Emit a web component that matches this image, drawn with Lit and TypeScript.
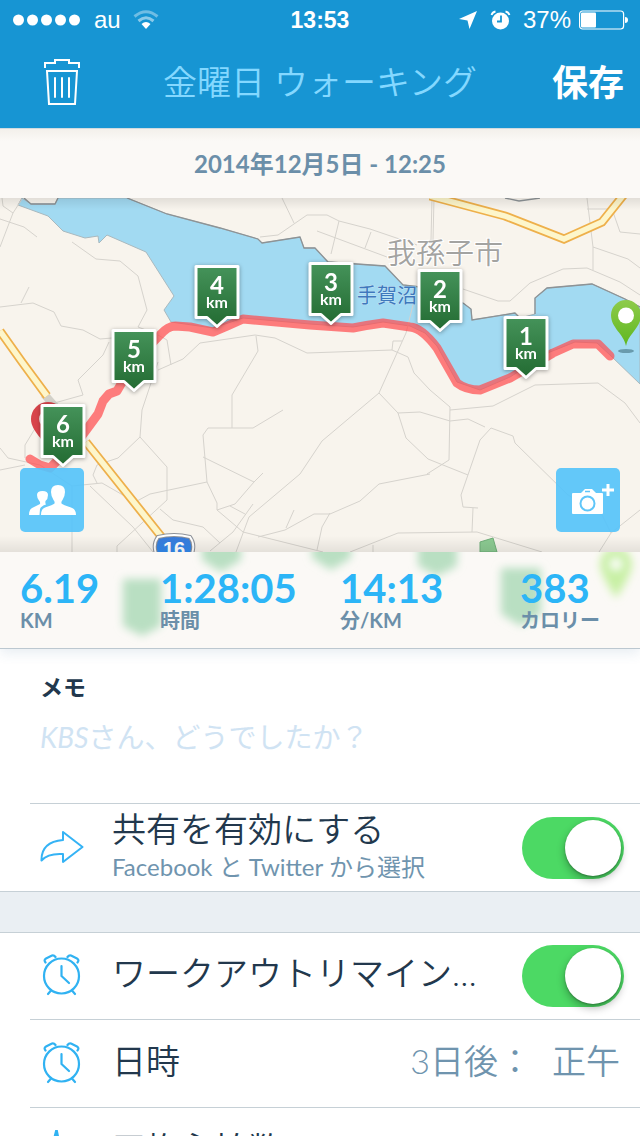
import { LitElement, html, svg, css } from "lit";
import { customElement, property, state } from "lit/decorators.js";

interface Marker {
  km: number;
  x: number;
  y: number;
}

const MARKERS: Marker[] = [
  { km: 6, x: 63, y: 404 },
  { km: 5, x: 134, y: 329 },
  { km: 4, x: 217, y: 265 },
  { km: 3, x: 331, y: 262 },
  { km: 2, x: 440, y: 269 },
  { km: 1, x: 526, y: 316 },
];

const LANES = [
  "2,198 3,206 13,213 22,199",
  "13,213 0,247",
  "0,219 24,227 37,237",
  "72,242 96,259 120,261 138,276 147,310 138,327 146,330",
  "29,287 21,303",
  "0,307 33,303 54,312 61,326 83,330 100,339 112,338",
  "109,342 103,355 78,380 83,395 40,407",
  "42,417 25,445 25,458",
  "158,370 183,359 200,343 255,335 275,338 307,353 392,350 408,357 414,373 430,390 450,407 449,460 427,474",
  "158,335 167,340 171,365",
  "158,362 142,410 140,437 118,458 97,465 93,475 97,483",
  "282,198 294,223",
  "260,237 278,235 307,215 327,215 339,221 370,229 417,245",
  "339,221 331,254",
  "317,231 387,257",
  "371,232 365,248",
  "256,336 258,351 232,395 232,428",
  "413,305 406,333 379,393 322,441 300,474 249,517 236,552",
  "392,350 393,341 402,341",
  "283,410 253,428 208,428 203,435 207,482 217,503 217,510 243,532 323,552",
  "203,457 254,482 263,473",
  "254,482 235,504 217,510",
  "230,506 245,514",
  "253,504 233,532 210,551",
  "258,537 285,530 314,514 330,514 360,501 379,484 430,474",
  "294,510 286,528",
  "330,513 322,527 317,550",
  "379,393 398,413 406,438 428,459 468,475",
  "398,413 420,412 450,421 468,419 485,427",
  "350,552 398,533 477,532 542,552",
  "373,545 373,552",
  "450,410 493,406 535,385 598,383 625,403 640,423",
  "602,515 568,495 515,443 513,436 491,428 480,440 461,495 463,507 478,508",
  "473,508 472,532",
  "602,515 611,533 599,552",
  "640,510 611,533",
  "0,448 8,458 40,465 72,486 102,483 135,502",
  "0,470 25,465",
  "90,486 133,527 153,552",
  "72,486 72,552",
  "137,501 150,494 207,482",
  "140,437 167,467 167,500 117,546 117,552",
  "160,509 173,520 203,527 220,543",
  "432,198 431,240",
  "434,198 433,240",
  "587,198 593,247 593,270",
  "593,247 628,259 640,268",
  "587,209 612,209 620,232 640,234",
  "463,289 498,301 510,301 530,283 563,269 587,268 620,282 640,295",
];

const SHORES = [
  "24,198 31,204 55,204 58,198",
  "127,198 167,214 220,228 258,239 262,243 300,237 304,248 315,248 328,262 385,266 403,285 420,287",
  "463,303 471,309 472,320 515,313 520,318",
  "535,314 535,298 547,288 592,284 625,299 640,307",
  "505,198 519,201 540,198",
];

const WATER =
  "M22 198 L31 204 55 204 58 198 127 198 167 214 220 228 258 239 262 243 300 237 304 248 315 248 328 262 385 266 403 285 430 288 463 303 471 309 472 320 515 313 520 318 535 314 535 298 547 288 592 284 625 299 640 307 V384 L611 356 597 343 575 342 550 352 510 377 480 390 457 382 437 346 425 333 410 326 383 322 353 327 310 324 243 318 213 328 171 322 164 310 174 296 146 252 107 235 99 243 98 236 85 238 63 231 48 216 18 205 Z";

const ROUTE =
  "M30 459 L40 465 50 468 57 461 75 445 87 429 98 414 103 401 109 394 117 391 134 362 160 335 Q168 326 175 326 L190 327 213 332 Q228 326 243 319 L310 325 353 328 Q368 325 383 323 L410 327 Q422 328 437 348 L457 383 Q466 390 480 390 L510 378 553 353 573 344 598 344 610 356";

const ROADS = [
  "0,331 22,362 47,396",
  "86,442 160,535 174,552",
  "430,196 505,216 564,239 602,222 626,192",
];

const BADGE = "M-21 1.500 H21 V52.500 H10 L0 61.500 L-10 52.500 H-21 Z";

@customElement("route-map")
export class RouteMap extends LitElement {
  static styles = css`
    :host {
      display: block;
      min-width: 0;
    }
    svg {
      display: block;
      width: 100%;
      height: 354px;
    }
    .lane {
      fill: none;
      stroke: #d6d3cd;
      stroke-width: 1;
    }
    .shore {
      fill: none;
      stroke: #8d9396;
      stroke-width: 1.300;
    }
    .road-edge {
      fill: none;
      stroke: #eeb04b;
      stroke-width: 9;
    }
    .road {
      fill: none;
      stroke: #fdf6cb;
      stroke-width: 5.500;
    }
    .route {
      fill: none;
      stroke: #ff4d50;
      stroke-opacity: 0.720;
      stroke-width: 9;
      stroke-linecap: round;
      stroke-linejoin: round;
    }
    .badge {
      fill: url(#badge);
      stroke: #fff;
      stroke-width: 3;
      stroke-linejoin: round;
    }
    .marker {
      filter: drop-shadow(0 1px 2px rgba(0, 0, 0, 0.350));
    }
    text {
      font-family: Lato, "Noto Sans CJK JP", sans-serif;
      text-anchor: middle;
    }
    .km {
      fill: #fff;
      font-size: 24px;
      font-weight: 700;
    }
    .unit {
      font-size: 16px;
    }
    .city {
      fill: #a3a3a1;
      font-size: 29px;
      font-weight: 350;
      stroke: #fff;
      stroke-width: 2;
      paint-order: stroke;
    }
    .lake {
      fill: #3e78bd;
      font-size: 20px;
      font-weight: 400;
      stroke: #c5e5f5;
      stroke-width: 1;
      paint-order: stroke;
    }
    .shield {
      fill: #fff;
      font-family: "Liberation Sans", sans-serif;
      font-size: 20px;
      font-weight: 700;
    }
  `;

  render() {
    return html`
      <svg viewBox="0 198 640 354" preserveAspectRatio="xMidYMid slice" role="img" aria-label="ウォーキングのルート">
        <defs>
          <linearGradient id="badge" x1="0" y1="0" x2="0" y2="1">
            <stop offset="0" stop-color="#45935a" />
            <stop offset="1" stop-color="#236b32" />
          </linearGradient>
          <linearGradient id="start" x1="0" y1="0" x2="0" y2="1">
            <stop offset="0" stop-color="#8ecb4b" />
            <stop offset="1" stop-color="#5fb71f" />
          </linearGradient>
          <linearGradient id="blue" x1="0" y1="0" x2="0" y2="1">
            <stop offset="0" stop-color="#3a78d6" />
            <stop offset="1" stop-color="#2f8ff5" />
          </linearGradient>
          <linearGradient id="top" x1="0" y1="0" x2="0" y2="1">
            <stop offset="0" stop-color="#000" stop-opacity=".09" />
            <stop offset="1" stop-color="#000" stop-opacity="0" />
          </linearGradient>
          <linearGradient id="bottom" x1="0" y1="1" x2="0" y2="0">
            <stop offset="0" stop-color="#000" stop-opacity=".08" />
            <stop offset="1" stop-color="#000" stop-opacity="0" />
          </linearGradient>
        </defs>
        <rect y="198" width="640" height="354" fill="#f8f4ed" />
        <path d=${WATER} fill="#a2daf2" stroke="#a9b9bf" stroke-width="1" />
        ${LANES.map((p) => svg`<polyline class="lane" points=${p} />`)}
        ${SHORES.map((p) => svg`<polyline class="shore" points=${p} />`)}
        <path d="M480 542 493 538 497 552H480Z" fill="#8ccb92" stroke="#6fae78" />
        <path d="M44 394 L58 410" stroke="#d3d1c9" stroke-width="8" />
        ${ROADS.map((p) => svg`<polyline class="road-edge" points=${p} /><polyline class="road" points=${p} />`)}
        <text class="city" x="445" y="264">我孫子市</text>
        <text class="lake" x="387" y="303">手賀沼</text>
        <path d="M48 452 C46 440 31 432 31 419 a17 17 0 0 1 34 0 C65 432 50 440 48 452Z" fill="#d8444b" />
        <circle cx="48" cy="419" r="9" fill="#f3dfdc" />
        <path class="route" d=${ROUTE} />
        <ellipse cx="626" cy="351" rx="8" ry="2" fill="#43717f" opacity=".6" />
        <path d="M626 346 C624 334 611 328 611 315 a15 15 0 0 1 30 0 C641 328 628 334 626 346Z" fill="url(#start)" />
        <circle cx="626" cy="315.500" r="8" fill="#fff" />
        <path d="M158 537 Q174 533 190 537 Q196 545 191 556 H157 Q152 545 158 537Z" fill="url(#blue)" stroke="#8e9299" stroke-width="4" />
        <path d="M158 537 Q174 533 190 537 Q196 545 191 556 H157 Q152 545 158 537Z" fill="none" stroke="#fff" stroke-width="2" />
        <text class="shield" x="174" y="556">16</text>
        ${MARKERS.map(
          (m) => svg`<g class="marker" transform="translate(${m.x} ${m.y})">
            <path class="badge" d=${BADGE} />
            <text class="km"><tspan x="0" y="29">${m.km}</tspan><tspan class="unit" x="0" y="43">km</tspan></text>
          </g>`
        )}
        <rect y="198" width="640" height="12" fill="url(#top)" />
        <rect y="536" width="640" height="16" fill="url(#bottom)" />
      </svg>
    `;
  }
}

@customElement("toggle-switch")
export class ToggleSwitch extends LitElement {
  @property() label = "";
  @state() private on = true;

  static styles = css`
    :host {
      display: block;
      flex: none;
    }
    .switch {
      appearance: none;
      display: flex;
      box-sizing: border-box;
      width: 102px;
      height: 62px;
      margin: 0;
      padding: 3px;
      border-radius: 31px;
      background: #dfe3e6;
    }
    .switch::before {
      content: "";
      width: 56px;
      height: 56px;
      border-radius: 50%;
      background: #fff;
      box-shadow: 0 4px 8px rgba(0, 0, 0, 0.300), 0 1px 2px rgba(0, 0, 0, 0.250);
    }
    .switch:checked {
      justify-content: flex-end;
      background: #4cd964;
    }
  `;

  render() {
    return html`<input
      class="switch"
      type="checkbox"
      role="switch"
      aria-label=${this.label}
      .checked=${this.on}
      @change=${() => (this.on = !this.on)}
    />`;
  }
}

const alarmIcon = html`<svg class="icon" viewBox="0 0 44 44" width="44" height="44" aria-hidden="true">
  <g fill="none" stroke="#30b2f2" stroke-width="2.200" stroke-linecap="round" stroke-linejoin="round">
    <circle cx="21.500" cy="22" r="17.500" />
    <path d="M21.500 12 V22 L29 29" />
    <path d="M5.500 8.500 Q3.500 6 6 4.500 L12 1.500 Q14 1 15.500 3" />
    <path d="M37.500 8.500 Q39.500 6 37 4.500 L31 1.500 Q29 1 27.500 3" />
    <path d="M11 36.500 L8 40 M32 36.500 L35 40" />
  </g>
</svg>`;

@customElement("app-root")
export class AppRoot extends LitElement {
  private stats = [
    { value: "6.19", unit: "KM" },
    { value: "1:28:05", unit: "時間" },
    { value: "14:13", unit: "分/KM" },
    { value: "383", unit: "カロリー" },
  ];

  static styles = css`
    :host {
      display: block;
      height: 100vh;
      overflow: hidden;
      background: #fff;
      color: #22384d;
      font-family: Lato, "Noto Sans CJK JP", sans-serif;
    }
    h1,
    h2,
    p {
      margin: 0;
    }
    button {
      border: 0;
      margin: 0;
      padding: 0;
      background: none;
      color: inherit;
      font-family: inherit;
    }
    svg {
      display: block;
      flex: none;
    }
    header {
      background: #1795d3;
      color: #fff;
    }
    .status {
      display: grid;
      grid-template-columns: 1fr auto 1fr;
      align-items: center;
      height: 40px;
      padding: 0 12px;
      font: 24px/40px "Liberation Sans", sans-serif;
    }
    .status-left,
    .status-right {
      display: flex;
      align-items: center;
      gap: 12px;
    }
    .status-right {
      justify-content: flex-end;
      gap: 8px;
    }
    .clock {
      font-size: 23px;
      font-weight: 700;
    }
    .nav {
      display: grid;
      grid-template-columns: 92px 1fr 92px;
      align-items: center;
      height: 84px;
      padding: 0 16px 4px;
    }
    .trash {
      justify-self: center;
    }
    .nav-title {
      text-align: center;
      color: #84d8ff;
      font-size: 34px;
      font-weight: 350;
      line-height: 48px;
      white-space: nowrap;
    }
    .save {
      justify-self: end;
      font-size: 36px;
      font-weight: 700;
      line-height: 48px;
      white-space: nowrap;
    }
    .date {
      border-top: 1px solid #cfdbe0;
      background: linear-gradient(#f3f0eb, #fbf9f6 12px);
      color: #6b8fa9;
      font-size: 24px;
      font-weight: 700;
      line-height: 69px;
      text-align: center;
    }
    .map {
      display: grid;
    }
    .map > * {
      grid-area: 1 / 1;
    }
    .tools {
      display: flex;
      justify-content: space-between;
      align-self: end;
      padding: 20px;
    }
    .tool {
      display: grid;
      place-items: center;
      width: 64px;
      height: 64px;
      border-radius: 5px;
      background: rgba(86, 195, 250, 0.920);
    }
    .stats {
      display: grid;
      overflow: hidden;
      border-bottom: 1px solid #bcc8d0;
      background: #fbf9f6;
      box-shadow: 0 4px 12px rgba(60, 110, 150, 0.120);
    }
    .stats > * {
      grid-area: 1 / 1;
    }
    .ghosts {
      width: 100%;
      height: 96px;
    }
    .figures {
      display: grid;
      grid-template-columns: 7fr 9fr 9fr 5fr;
      padding: 12px 20px;
      white-space: nowrap;
    }
    .figure {
      min-width: 0;
    }
    .value {
      color: #2cb5f7;
      font-size: 40px;
      font-weight: 700;
      line-height: 48px;
    }
    .unit {
      color: #6b8fa9;
      font-size: 20px;
      font-weight: 700;
      line-height: 16px;
    }
    .memo {
      display: flex;
      flex-direction: column;
      height: 154px;
      box-sizing: border-box;
      padding: 20px 40px 0;
      gap: 12px;
    }
    .memo-label {
      font-size: 23px;
      font-weight: 700;
      line-height: 36px;
    }
    .memo-text {
      height: 72px;
      padding: 0;
      border: 0;
      outline: 0;
      resize: none;
      background: none;
      color: #22384d;
      font: 400 28px/40px Lato, "Noto Sans CJK JP", sans-serif;
    }
    .memo-text::placeholder {
      color: #d0e3f3;
      opacity: 1;
      font-style: italic;
      font-synthesis: none;
    }
    .row {
      display: flex;
      align-items: center;
      box-sizing: border-box;
      height: 88px;
      margin-left: 30px;
      padding: 0 16px 0 10px;
      border-top: 1px solid #c6d0d6;
    }
    .row-first {
      height: 86px;
      border-top: 0;
    }
    .row-text {
      flex: 1;
      min-width: 0;
      padding: 0 20px 6px 28px;
    }
    .row-title {
      overflow: hidden;
      font-size: 34px;
      font-weight: 350;
      line-height: 44px;
      text-overflow: ellipsis;
      white-space: nowrap;
    }
    .row-note {
      color: #6f94ae;
      font-size: 24px;
      font-weight: 400;
      line-height: 32px;
    }
    .row-value {
      display: flex;
      gap: 20px;
      padding: 0 4px 6px 0;
      color: #6f94ae;
      font-size: 34px;
      font-weight: 350;
      line-height: 44px;
      white-space: nowrap;
    }
    .divider {
      height: 40px;
      border-top: 1px solid #c6d0d6;
      border-bottom: 1px solid #c6d0d6;
      background: #eaeff3;
    }
  `;

  render() {
    return html`
      <header>
        <div class="status">
          <div class="status-left">
            <svg width="70" height="12" viewBox="0 0 70 12" fill="#fff" aria-hidden="true">
              <circle cx="6.500" cy="6" r="5.500" /><circle cx="20.500" cy="6" r="5.500" /><circle cx="34.500" cy="6" r="5.500" />
              <circle cx="48.500" cy="6" r="5.500" /><circle cx="62.500" cy="6" r="5.500" />
            </svg>
            <span>au</span>
            <svg width="26" height="20" viewBox="0 0 26 20" aria-hidden="true">
              <g fill="none" stroke="#fff" stroke-width="3">
                <path d="M1.500 6.500 Q13 -3 24.500 6.500" opacity=".38" />
                <path d="M5.500 11 Q13 4.500 20.500 11" opacity=".5" />
              </g>
              <path d="M8.500 14 Q13 10 17.500 14 L13 19Z" fill="#fff" />
            </svg>
          </div>
          <span class="clock">13:53</span>
          <div class="status-right">
            <svg width="18" height="20" viewBox="0 0 18 20" aria-hidden="true"><path d="M18 1 L0 9 8.500 10.500 10.500 19Z" fill="#fff" /></svg>
            <svg width="30" height="20" viewBox="-3 0 24 20" aria-hidden="true">
              <circle cx="9.500" cy="11" r="8.500" fill="#fff" />
              <path d="M0.500 5 Q1.500 2 4.500 1.500 M18.500 5 Q17.500 2 14.500 1.500" fill="none" stroke="#fff" stroke-width="1.800" />
              <path d="M10 5.500 V11.500 H6" fill="none" stroke="#1795d3" stroke-width="1.800" />
            </svg>
            <span>37%</span>
            <svg width="49" height="20" viewBox="0 0 49 20" aria-hidden="true">
              <rect x=".6" y="1" width="44" height="18" rx="3" fill="none" stroke="#fff" stroke-width="1.200" />
              <rect x="2" y="2.500" width="15" height="15" rx="1" fill="#fff" />
              <path d="M46 7 Q49 7 49 10 Q49 13 46 13Z" fill="#fff" />
            </svg>
          </div>
        </div>
        <div class="nav">
          <button class="trash" aria-label="削除">
            <svg width="36" height="46" viewBox="0 0 36 46" fill="none" stroke="#fff" stroke-width="2" aria-hidden="true">
              <path d="M1 9 V4 H11 V1 H25 V4 H35 V9" />
              <path d="M3 12 H33 L31 45 H5 Z" />
              <path d="M11 19 V38 M18 19 V38 M25 19 V38" stroke-linecap="round" />
            </svg>
          </button>
          <h1 class="nav-title">金曜日 ウォーキング</h1>
          <button class="save">保存</button>
        </div>
      </header>
      <p class="date">2014年12月5日 - 12:25</p>
      <section class="map">
        <route-map></route-map>
        <div class="tools">
          <button class="tool" aria-label="友達">
            <svg width="48" height="32" viewBox="0 0 48 32" fill="#fff" aria-hidden="true">
              <path d="M1 31 Q1 25 5 23.500 L12 20 Q12.500 18 11 16.500 Q9 14 9 11 Q9 7 14.500 7 Q20 7 20 11 Q20 15 17.500 17 Q17 19 18 20.500 Q13 22 12 25 L11.500 31Z" />
              <path d="M13 31 Q13 25 17 23.500 Q25 21 26.500 19.500 Q27 17.500 25.500 16 Q23 12 23 8 Q23 1 30 1 Q37 1 37 8 Q37 12 34.500 16 Q33 17.500 33.500 19.500 Q35 21 43 23.500 Q48 25 48 31Z" />
            </svg>
          </button>
          <button class="tool" aria-label="写真を追加">
            <svg width="64" height="64" viewBox="0 0 64 64" aria-hidden="true">
              <path d="M17 25 H25 L29 21 H36 L40 25 H46 Q47 25 47 26 V45 Q47 46 46 46 H17 Q16 46 16 45 V26 Q16 25 17 25Z" fill="#fff" />
              <circle cx="31.500" cy="35.500" r="7" fill="#fff" stroke="#5fc6f9" stroke-width="2" />
              <path d="M29 23.500 H34" stroke="#5fc6f9" stroke-width="1.500" />
              <path d="M52 16 V28 M46 22 H58" stroke="#fff" stroke-width="3" />
            </svg>
          </button>
        </div>
      </section>
      <section class="stats">
        <svg class="ghosts" viewBox="0 0 640 96" preserveAspectRatio="xMidYMid slice" aria-hidden="true">
          <defs><filter id="soft" x="-30%" y="-30%" width="160%" height="160%"><feGaussianBlur stdDeviation="4.500" /></filter></defs>
          <g filter="url(#soft)" fill="#b9dfc2">
            <path d="M123 27 H161 V74 L142 84 123 74Z" />
            <path d="M202 -30 H241 V8 L221 20 202 8Z" />
            <path d="M312 -30 H351 V6 L331 18 312 6Z" />
            <path d="M418 -30 H457 V14 L437 24 418 14Z" />
            <path d="M501 16 H541 V62 L521 74 501 62Z" />
            <path d="M616 46 Q600 22 600 12 Q602 -4 616 -4 Q630 -4 632 12 Q632 22 616 46Z" fill="#c8f0a4" />
            <circle cx="616" cy="12" r="6" fill="#fff" />
          </g>
        </svg>
        <div class="figures">
          ${this.stats.map(
            (s) => html`<div class="figure">
              <p class="value">${s.value}</p>
              <p class="unit">${s.unit}</p>
            </div>`
          )}
        </div>
      </section>
      <section class="memo">
        <label class="memo-label" for="memo">メモ</label>
        <textarea class="memo-text" id="memo" placeholder="KBSさん、どうでしたか？"></textarea>
      </section>
      <section>
        <div class="row">
          <svg class="icon" width="44" height="44" viewBox="0 0 44 44" aria-hidden="true">
            <path d="M23 6 L42.500 21 23 36 V28 Q8 27 1.500 34.500 Q1 16 23 14Z" fill="none" stroke="#35b3f5" stroke-width="2" stroke-linejoin="round" />
          </svg>
          <div class="row-text">
            <h2 class="row-title">共有を有効にする</h2>
            <p class="row-note">Facebook と Twitter から選択</p>
          </div>
          <toggle-switch label="共有を有効にする"></toggle-switch>
        </div>
      </section>
      <div class="divider"></div>
      <section>
        <div class="row row-first">
          ${alarmIcon}
          <div class="row-text"><h2 class="row-title">ワークアウトリマイン…</h2></div>
          <toggle-switch label="ワークアウトリマインダー"></toggle-switch>
        </div>
        <div class="row">
          ${alarmIcon}
          <div class="row-text"><h2 class="row-title">日時</h2></div>
          <p class="row-value"><span>3日後：</span><span>正午</span></p>
        </div>
        <div class="row">
          <svg class="icon" width="44" height="44" viewBox="0 0 44 44" aria-hidden="true">
            <path d="M1 26 H10 L16.500 0 L25 42 L31 26 H43" fill="none" stroke="#30b2f2" stroke-width="2.500" stroke-linejoin="round" />
          </svg>
          <div class="row-text"><h2 class="row-title">平均心拍数</h2></div>
        </div>
      </section>
    `;
  }
}
